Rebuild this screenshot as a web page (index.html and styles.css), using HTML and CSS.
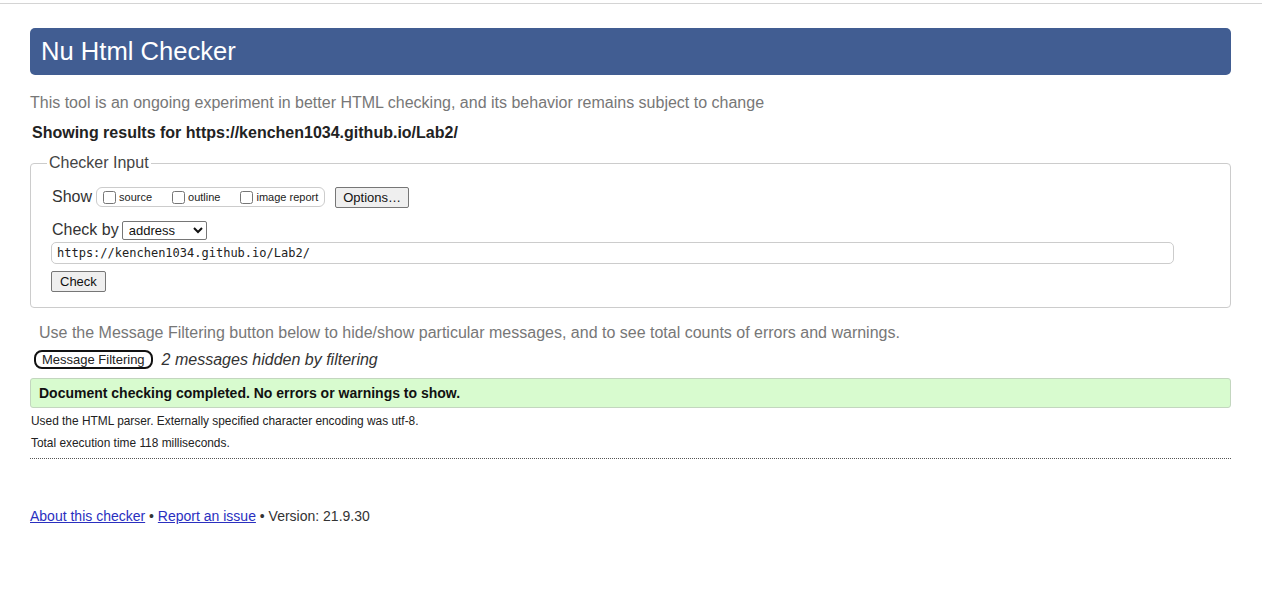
FILE: index.html
```html
<!DOCTYPE html>
<html>
<head>
<meta charset="utf-8">
<title>Nu Html Checker</title>
<link rel="stylesheet" href="styles.css">
</head>
<body>
<div class="topline"></div>
<div class="page">
  <h1 class="title">Nu Html Checker</h1>
  <p class="intro">This tool is an ongoing experiment in better HTML checking, and its behavior remains subject to change</p>
  <p class="showing">Showing results for https://kenchen1034.github.io/Lab2/</p>
  <fieldset class="input-box">
    <legend class="legend">Checker Input</legend>
    <div class="row show-row">
      <span class="lbl">Show</span>
      <span class="opts">
        <label class="opt"><input type="checkbox" class="cb">source</label>
        <label class="opt"><input type="checkbox" class="cb">outline</label>
        <label class="opt"><input type="checkbox" class="cb">image report</label>
      </span>
      <button class="btn options">Options…</button>
    </div>
    <div class="row by-row">
      <span class="lbl">Check by</span>
      <select class="sel"><option>address</option></select>
    </div>
    <input class="url" type="text" value="https://kenchen1034.github.io/Lab2/">
    <button class="btn check">Check</button>
  </fieldset>
  <p class="filter-note">Use the Message Filtering button below to hide/show particular messages, and to see total counts of errors and warnings.</p>
  <div class="filter-row">
    <button class="filter-btn">Message Filtering</button>
    <span class="hidden-count">2 messages hidden by filtering</span>
  </div>
  <div class="success">Document checking completed. No errors or warnings to show.</div>
  <p class="small">Used the HTML parser. Externally specified character encoding was utf-8.</p>
  <p class="small">Total execution time 118 milliseconds.</p>
  <div class="dotted"></div>
  <p class="footer"><a href="#" class="link">About this checker</a> • <a href="#" class="link">Report an issue</a> • Version: 21.9.30</p>
</div>
</body>
</html>
```
FILE: styles.css
```css
html, body {
  margin: 0;
  padding: 0;
  background: #fff;
}
body {
  font-family: "Liberation Sans", Arial, sans-serif;
  color: #222;
}
.topline {
  margin-top: 3px;
  height: 1px;
  background: #d4d4d4;
}
.page {
  padding: 24px 31px 40px 30px;
}
.title {
  margin: 0;
  height: 47px;
  box-sizing: border-box;
  background: #415d92;
  color: #fff;
  border-radius: 5px;
  font-size: 25.6px;
  font-weight: normal;
  line-height: 47px;
  padding-left: 11px;
}
.intro {
  margin: 18px 0 0 0;
  font-size: 16px;
  line-height: 20px;
  color: #777;
}
.showing {
  margin: 10px 0 0 2px;
  font-size: 16px;
  line-height: 20px;
  font-weight: bold;
  color: #222;
}
.input-box {
  margin: 11px 0 0 0;
  border: 1px solid #ccc;
  border-radius: 4px;
  padding: 10px 20px 15px 20px;
}
.legend {
  font-size: 16px;
  color: #444;
  padding: 0 2px;
  margin-left: -4px;
}
.row {
  display: flex;
  align-items: center;
}
.show-row {
  height: 22px;
  margin-top: 4px;
}
.lbl {
  font-size: 16px;
  color: #333;
  margin-left: 1px;
}
.opts {
  display: inline-flex;
  align-items: center;
  border: 1px solid #ccc;
  border-radius: 6px;
  height: 18px;
  margin-left: 4px;
  padding: 0 6px 0 4px;
}
.opt {
  display: inline-flex;
  align-items: center;
  font-size: 11px;
  color: #222;
  margin-right: 18px;
}
.opt:last-child {
  margin-right: 0;
}
.cb {
  margin: 0 3px 0 2px;
  width: 13px;
  height: 13px;
}
.btn {
  font-family: "Liberation Sans", Arial, sans-serif;
  font-size: 13px;
  color: #111;
  background: #efefef;
  border: 1px solid #767676;
  border-radius: 2px;
  padding: 0 7px;
  height: 21px;
}
.options {
  margin-left: 10px;
}
.by-row {
  margin-top: 12px;
  height: 20px;
}
.sel {
  margin-left: 3px;
  font-family: "Liberation Sans", Arial, sans-serif;
  font-size: 13px;
  height: 19px;
  width: 85px;
  border: 1px solid #767676;
  border-radius: 2px;
  padding: 0 2px;
  background: #fff;
  color: #111;
}
.url {
  display: block;
  box-sizing: border-box;
  width: 1123px;
  height: 22px;
  margin: 2px 0 0 0;
  border: 1px solid #ccc;
  border-radius: 5px;
  padding: 0 5px;
  font-family: "DejaVu Sans Mono", "Liberation Mono", monospace;
  font-size: 12px;
  color: #222;
}
.check {
  display: block;
  margin: 7px 0 0 0;
  height: 21px;
  padding: 0 8px;
}
.filter-note {
  margin: 15px 0 0 9px;
  font-size: 16px;
  line-height: 20px;
  color: #777;
}
.filter-row {
  display: flex;
  align-items: center;
  margin-top: 7px;
  margin-left: 4px;
}
.filter-btn {
  font-family: "Liberation Sans", Arial, sans-serif;
  font-size: 13px;
  color: #222;
  background: #fff;
  border: 2px solid #111;
  border-radius: 8px;
  height: 19px;
  padding: 0 6px;
  line-height: 14px;
}
.hidden-count {
  margin-left: 9px;
  font-size: 16px;
  font-style: italic;
  color: #333;
}
.success {
  margin-top: 9px;
  box-sizing: border-box;
  height: 30px;
  line-height: 28px;
  background: #d8fbcf;
  border: 1px solid #c3d6bf;
  border-radius: 3px;
  padding-left: 8px;
  font-size: 14px;
  font-weight: bold;
  color: #111;
}
.small {
  margin: 6px 0 0 1px;
  font-size: 11.9px;
  line-height: 15px;
  color: #222;
}
.small + .small {
  margin-top: 7px;
}
.dotted {
  margin-top: 7px;
  border-top: 1px dotted #555;
}
.footer {
  margin: 49px 0 0 0;
  font-size: 14px;
  line-height: 16px;
  color: #333;
}
.link {
  color: #2a2fbf;
  text-decoration: underline;
}
```
